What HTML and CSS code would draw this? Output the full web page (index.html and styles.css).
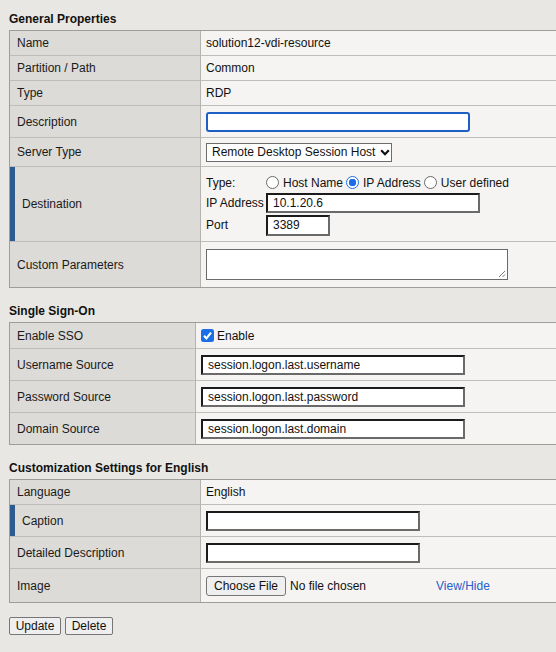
FILE: index.html
```html
<!DOCTYPE html>
<html>
<head>
<meta charset="utf-8">
<link rel="stylesheet" href="styles.css">
</head>
<body>
<div class="page">
  <h2 class="sec-title">General Properties</h2>
  <table class="props">
    <colgroup><col class="c-label"><col></colgroup>
    <tr class="h24"><td class="lbl">Name</td><td class="val">solution12-vdi-resource</td></tr>
    <tr class="h25"><td class="lbl">Partition / Path</td><td class="val">Common</td></tr>
    <tr class="h25"><td class="lbl">Type</td><td class="val">RDP</td></tr>
    <tr class="h32"><td class="lbl">Description</td><td class="val"><input class="txt focus" type="text"></td></tr>
    <tr class="h29"><td class="lbl">Server Type</td><td class="val">
      <span class="select">Remote Desktop Session Host <svg class="chev" width="10" height="7" viewBox="0 0 10 7"><path d="M1.2 1.3 L5 5.2 L8.8 1.3" fill="none" stroke="#111" stroke-width="2.2"/></svg></span>
    </td></tr>
    <tr class="h75"><td class="lbl req">Destination</td><td class="val">
      <div class="dest">
        <div class="drow"><span class="dlabel">Type:</span>
          <span class="radio"></span><span class="rtxt">Host Name</span>
          <span class="radio on"></span><span class="rtxt">IP Address</span>
          <span class="radio"></span><span class="rtxt">User defined</span>
        </div>
        <div class="drow"><span class="dlabel">IP Address</span><span class="box ip">10.1.20.6</span></div>
        <div class="drow"><span class="dlabel">Port</span><span class="box port">3389</span></div>
      </div>
    </td></tr>
    <tr class="h46"><td class="lbl">Custom Parameters</td><td class="val">
      <span class="textarea"><svg class="grip" width="8" height="8" viewBox="0 0 8 8"><path d="M7 1 L1 7 M7 4.5 L4.5 7" stroke="#777" stroke-width="1"/></svg></span>
    </td></tr>
  </table>

  <h2 class="sec-title">Single Sign-On</h2>
  <table class="props sso">
    <colgroup><col class="c-label2"><col></colgroup>
    <tr class="h25"><td class="lbl">Enable SSO</td><td class="val"><span class="check"><svg width="13" height="13" viewBox="0 0 13 13"><rect x="0" y="0" width="13" height="13" rx="2.5" fill="#1a6ee8"/><path d="M3 6.8 L5.4 9.3 L10 3.6" fill="none" stroke="#fff" stroke-width="2.1"/></svg></span><span class="ctxt">Enable</span></td></tr>
    <tr class="h32"><td class="lbl">Username Source</td><td class="val"><span class="box src">session.logon.last.username</span></td></tr>
    <tr class="h32"><td class="lbl">Password Source</td><td class="val"><span class="box src">session.logon.last.password</span></td></tr>
    <tr class="h32"><td class="lbl">Domain Source</td><td class="val"><span class="box src">session.logon.last.domain</span></td></tr>
  </table>

  <h2 class="sec-title">Customization Settings for English</h2>
  <table class="props">
    <colgroup><col class="c-label"><col></colgroup>
    <tr class="h24"><td class="lbl">Language</td><td class="val">English</td></tr>
    <tr class="h32"><td class="lbl req">Caption</td><td class="val"><span class="box cap"></span></td></tr>
    <tr class="h32"><td class="lbl">Detailed Description</td><td class="val"><span class="box cap"></span></td></tr>
    <tr class="h34"><td class="lbl">Image</td><td class="val">
      <div class="filerow"><span class="btn fbtn">Choose File</span><span class="nofile">No file chosen</span><a class="link" href="#">View/Hide</a></div>
    </td></tr>
  </table>

  <div class="actions">
    <span class="btn">Update</span><span class="btn">Delete</span>
  </div>
</div>
</body>
</html>
```

FILE: styles.css
```css
html, body {
  margin: 0;
  padding: 0;
  overflow: hidden;
  background: #e8e7e3;
}
body {
  font-family: "Liberation Sans", Arial, sans-serif;
  font-size: 12px;
  color: #111;
  width: 556px;
  height: 652px;
}
.page {
  padding: 12px 0 0 9px;
}
.sec-title {
  font-size: 12px;
  font-weight: bold;
  line-height: 14px;
  margin: 0 0 4px 0;
  color: #111;
}
.props {
  border-collapse: separate;
  border-spacing: 0;
  width: 560px;
  border: 1px solid #9d9d9b;
  margin-bottom: 16px;
  table-layout: fixed;
}
.c-label { width: 191px; }
.c-label2 { width: 186px; }
.props td {
  border-top: 1px solid #bebdba;
  padding: 0;
  vertical-align: middle;
  line-height: 14px;
}
.props tr:first-child td { border-top: 0; }
.props td.lbl {
  background: #dcdbd7;
  border-right: 1px solid #b4b3b0;
  padding-left: 7px;
  color: #1a1a1a;
}
.props td.lbl.req {
  box-shadow: inset 5px 0 0 #2e5b8e;
  padding-left: 12px;
}
.props td.val {
  background: #f5f4f2;
  padding-left: 5px;
}
.h24 { height: 24px; }
.h25 { height: 25px; }
.h29 { height: 29px; }
.h32 { height: 32px; }
.h34 { height: 34px; }
.h46 { height: 46px; }
.h75 { height: 75px; }

.txt {
  display: block;
  box-sizing: border-box;
  margin: 0;
  width: 264px;
  height: 20px;
  background: #fff;
  font: inherit;
}
.txt.focus {
  border: 2px solid #1d5fc4;
  border-radius: 3px;
  outline: none;
}
.select {
  display: inline-flex;
  align-items: center;
  box-sizing: border-box;
  height: 19px;
  width: 186px;
  border: 1px solid #6c6c6c;
  background: #fff;
  padding-left: 5px;
  gap: 4px;
  font-size: 12px;
  white-space: nowrap;
}
.chev { margin-left: 1px; }

.dest { display: flex; flex-direction: column; padding-top: 2px; }
.drow { display: flex; align-items: center; }
.drow:nth-child(1) { height: 18px; }
.drow:nth-child(2) { height: 21px; margin-top: 1px; }
.drow:nth-child(3) { height: 23px; }
.dlabel { width: 60px; flex: none; }
.radio {
  box-sizing: border-box;
  width: 13px; height: 13px;
  border-radius: 50%;
  border: 1px solid #6a6a6a;
  background: #fff;
  margin-right: 4px;
  flex: none;
}
.radio.on {
  border: 1px solid #1a6ee8;
  background: radial-gradient(circle, #1a6ee8 0 3.5px, #fff 4px);
}
.rtxt { margin-right: 3px; }
.box {
  display: flex;
  align-items: center;
  box-sizing: border-box;
  height: 20px;
  background: #fff;
  border: 2px solid;
  border-color: #1b1b1b #6a6a6a #6a6a6a #1b1b1b;
  padding-left: 5px;
}
.ip { width: 214px; }
.port { width: 64px; height: 21px; }
.src { width: 264px; }
.cap { width: 214px; }
.textarea {
  display: block;
  position: relative;
  box-sizing: border-box;
  width: 302px;
  height: 31px;
  background: #fff;
  border: 1px solid #6a6a6a;
}
.grip { position: absolute; right: 1px; bottom: 1px; }

.check { display: inline-block; width: 13px; height: 13px; vertical-align: -2px; margin-right: 3px; }
.check svg { display: block; }

.filerow { display: flex; align-items: center; }
.btn {
  display: inline-flex;
  align-items: center;
  justify-content: center;
  box-sizing: border-box;
  height: 18px;
  padding: 0 6px;
  background: #efefef;
  border: 1px solid #767676;
  border-radius: 2px;
  color: #111;
  font-size: 12px;
}
.fbtn { height: 20px; width: 80px; border-radius: 3px; }
.nofile { margin-left: 4px; width: 146px; }
.link { color: #2660c9; text-decoration: none; }

.actions {
  display: flex;
  gap: 4px;
  margin-top: -2px;
}
.actions .btn:first-child { width: 52px; }
.actions .btn:last-child { width: 48px; }
```
